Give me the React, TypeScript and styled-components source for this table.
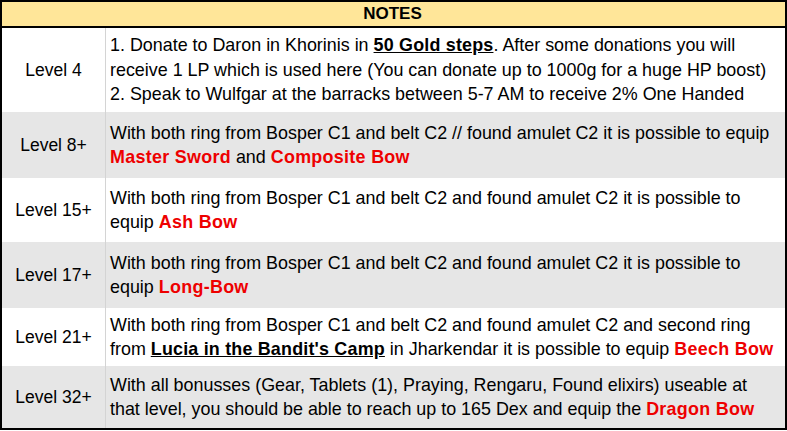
import type { ReactNode } from 'react'
import styled, { createGlobalStyle } from 'styled-components'

const GlobalStyle = createGlobalStyle`
  html, body {
    margin: 0;
    padding: 0;
    background: #ffffff;
  }
  body {
    font-family: "Liberation Sans", Arial, sans-serif;
  }
`

const Table = styled.div`
  width: 787px;
  box-sizing: border-box;
  border: 2px solid #000000;
  display: flex;
  flex-direction: column;
  color: #000000;
  font-size: 17.5px;
  line-height: 24.5px;
`

const Header = styled.div`
  height: 24px;
  display: flex;
  align-items: center;
  justify-content: center;
  background-color: #ffe699;
  border-bottom: 2px solid #000000;
  font-weight: 700;
  font-size: 17px;
  padding-right: 2px;
`

const Row = styled.div<{ $shaded: boolean; $height: number }>`
  display: grid;
  grid-template-columns: 104px 1fr;
  height: ${(p) => p.$height}px;
  background-color: ${(p) => (p.$shaded ? '#e6e6e6' : '#ffffff')};
`

const LevelCell = styled.div`
  display: flex;
  align-items: center;
  justify-content: center;
  border-right: 1px solid #d4d4d4;
`

const NoteCell = styled.div`
  display: flex;
  align-items: center;
  padding-left: 4px;
  white-space: nowrap;
  font-size: 17.9px;
`

const Item = styled.span`
  color: #ee0000;
  font-weight: 700;
  letter-spacing: 0.3px;
`

const Link = styled.span`
  font-weight: 700;
  text-decoration: underline;
  letter-spacing: 0.2px;
`

interface NoteRow {
  level: string
  height: number
  content: ReactNode
}

const rows: NoteRow[] = [
  {
    level: 'Level 4',
    height: 84,
    content: (
      <>
        1. Donate to Daron in Khorinis in <Link>50 Gold steps</Link>. After some donations you will
        <br />
        receive 1 LP which is used here (You can donate up to 1000g for a huge HP boost)
        <br />
        2. Speak to Wulfgar at the barracks between 5-7 AM to receive 2% One Handed
      </>
    ),
  },
  {
    level: 'Level 8+',
    height: 66,
    content: (
      <>
        With both ring from Bosper C1 and belt C2 // found amulet C2 it is possible to equip
        <br />
        <Item>Master Sword</Item> and <Item>Composite Bow</Item>
      </>
    ),
  },
  {
    level: 'Level 15+',
    height: 64,
    content: (
      <>
        With both ring from Bosper C1 and belt C2 and found amulet C2 it is possible to
        <br />
        equip <Item>Ash Bow</Item>
      </>
    ),
  },
  {
    level: 'Level 17+',
    height: 66,
    content: (
      <>
        With both ring from Bosper C1 and belt C2 and found amulet C2 it is possible to
        <br />
        equip <Item>Long-Bow</Item>
      </>
    ),
  },
  {
    level: 'Level 21+',
    height: 58,
    content: (
      <>
        With both ring from Bosper C1 and belt C2 and found amulet C2 and second ring
        <br />
        from <Link>Lucia in the Bandit's Camp</Link> in Jharkendar it is possible to equip{' '}
        <Item>Beech Bow</Item>
      </>
    ),
  },
  {
    level: 'Level 32+',
    height: 62,
    content: (
      <>
        With all bonusses (Gear, Tablets (1), Praying, Rengaru, Found elixirs) useable at
        <br />
        that level, you should be able to reach up to 165 Dex and equip the{' '}
        <Item>Dragon Bow</Item>
      </>
    ),
  },
]

const App = () => {
  return (
    <>
      <GlobalStyle />
      <Table>
        <Header>NOTES</Header>
        {rows.map((row, i) => (
          <Row key={row.level} $shaded={i % 2 === 1} $height={row.height}>
            <LevelCell>{row.level}</LevelCell>
            <NoteCell>
              <div>{row.content}</div>
            </NoteCell>
          </Row>
        ))}
      </Table>
    </>
  )
}

export default App
